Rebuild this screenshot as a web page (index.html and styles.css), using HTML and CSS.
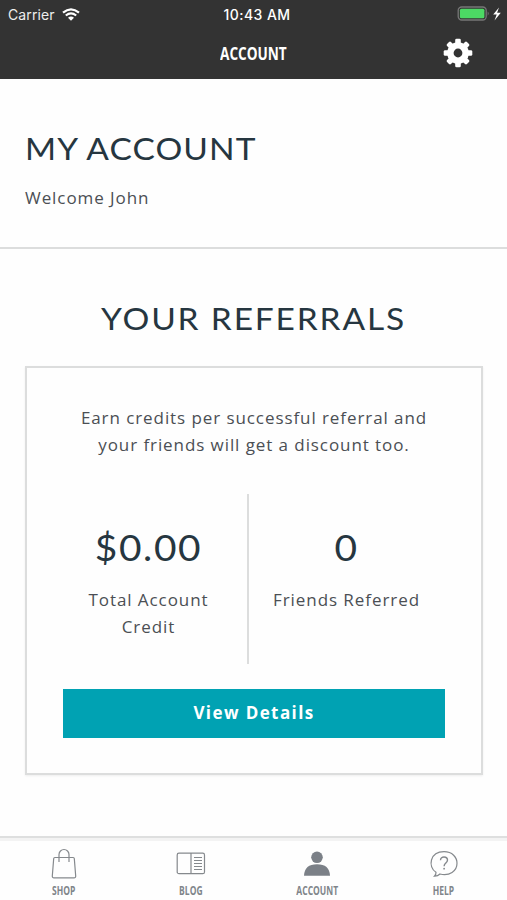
FILE: index.html
```html
<!DOCTYPE html>
<html lang="en">
<head>
<meta charset="utf-8">
<title>Account</title>
<link rel="stylesheet" href="styles.css">
</head>
<body>
<header class="top">
  <div class="status">
    <div class="carrier"><span>Carrier</span>
      <svg class="wifi" width="18" height="13" viewBox="0 0 18 13" fill="none" stroke="#fff" stroke-width="2.2"><path d="M1 4.700Q9-2 17 4.700M3.800 7.500Q9 3.200 14.200 7.500"/><path d="M6 9.800Q9 7.400 12 9.800L9 12.800Z" fill="#fff" stroke="none"/></svg>
    </div>
    <time class="time">10:43 AM</time>
    <div class="power">
      <svg width="46" height="16" viewBox="0 0 46 16"><rect x="1.200" y="1" width="28" height="13" rx="3.500" fill="none" stroke="#777" stroke-width="1.300"/><rect x="2.900" y="2.800" width="24.500" height="9.500" rx="1.500" fill="#4cd964"/><path d="M30.700 5.500q2 2 0 4.200z" fill="#777"/><path d="M42 1.500 36.200 8.600h3.500L37.500 14.500l6.300-7.700h-3.700z" fill="#fff"/></svg>
    </div>
  </div>
  <div class="nav">
    <h1 class="nav-title"><span>ACCOUNT</span></h1>
    <svg class="gear" width="30" height="30" viewBox="-15 -15 30 30" fill="#fff"><g><rect x="-2.800" y="-14.300" width="5.600" height="28.600" rx="1.400"/><rect x="-14.300" y="-2.800" width="28.600" height="5.600" rx="1.400"/></g><g transform="rotate(45)"><rect x="-2.800" y="-14.100" width="5.600" height="28.200" rx="1.400"/><rect x="-14.100" y="-2.800" width="28.200" height="5.600" rx="1.400"/></g><circle r="10.800"/><circle r="4.400" fill="#333"/></svg>
  </div>
</header>
<main>
  <section class="intro">
    <h2 class="heading my-account">MY ACCOUNT</h2>
    <p class="welcome">Welcome John</p>
  </section>
  <section class="referrals">
    <h2 class="heading your-referrals">YOUR REFERRALS</h2>
    <div class="card">
      <p class="blurb">Earn credits per successful referral and<br>your friends will get a discount too.</p>
      <div class="stats">
        <div class="stat"><strong class="number">$0.00</strong><span class="label">Total Account<br>Credit</span></div>
        <div class="stat"><strong class="number">0</strong><span class="label">Friends Referred</span></div>
      </div>
      <button class="details">View Details</button>
    </div>
  </section>
</main>
<nav class="tabs">
  <div class="tab">
    <svg width="30" height="34" viewBox="0 0 30 34" fill="none" stroke="#85898d" stroke-width="1.200"><path d="M5.800 11.500h18.400q1 0 1.100 1L26.700 30q.1 1.800-1.700 1.800H5Q3.200 31.800 3.300 30L4.700 12.500q.1-1 1.100-1zM10 16V8.500a5 5 0 0 1 10 0V16"/></svg>
    <span class="tab-name">SHOP</span>
  </div>
  <div class="tab">
    <svg width="30" height="34" viewBox="0 0 30 34" fill="none" stroke="#85898d" stroke-width="1.200"><rect x="1.200" y="7.200" width="27.300" height="20.500" rx="1.800"/><path d="M15 7v21M18 11.500h8M18 14.500h8M18 17.500h8M18 20.500h8M18 23.500h8"/></svg>
    <span class="tab-name">BLOG</span>
  </div>
  <div class="tab">
    <svg width="30" height="34" viewBox="0 0 30 34" fill="#7b8087"><circle cx="15" cy="11.300" r="5.800"/><path d="M2 29.700Q2.500 18.300 15 18.300T28 29.700z"/></svg>
    <span class="tab-name">ACCOUNT</span>
  </div>
  <div class="tab">
    <svg width="30" height="34" viewBox="0 0 30 34" fill="none" stroke="#85898d" stroke-width="1.200"><path d="M7 26.300C-1.500 21 .8 5.700 15 5.700c8.300 0 13 5.500 13 11.500 0 8-7.500 13-17 10.800-1.500 1.500-3.500 2.300-5.600 2.200Q7.200 28.500 7 26.300z"/><path d="M11.500 14.300c0-4.600 7-4.200 7-.2 0 3-3.400 3-3.400 6.200" stroke-width="1.400"/><circle cx="15.100" cy="22.700" r=".9" fill="#85898d" stroke="none"/></svg>
    <span class="tab-name">HELP</span>
  </div>
</nav>
</body>
</html>
```
FILE: styles.css
```css
* { box-sizing: border-box; margin: 0; padding: 0; }
body { width: 507px; height: 900px; overflow: hidden; display: flex; flex-direction: column; background: #fefefe; font-family: "Open Sans", sans-serif; color: #4b4f54; }
svg { display: block; }
.top { height: 79px; flex: none; background: #333; color: #fff; }
.status { height: 27px; display: grid; grid-template-columns: 1fr 1fr 1fr; align-items: center; padding: 0 4px 0 8px; font: 14px/27px Inter, sans-serif; }
.carrier { display: flex; align-items: center; gap: 7px; color: #eee; letter-spacing: .1px; }
.time { text-align: center; font-weight: 500; font-size: 14px; letter-spacing: .45px; padding-left: 3px; padding-top: 1px; white-space: nowrap; }
.power { display: flex; justify-content: flex-end; }
.nav { display: grid; grid-template-columns: 1fr 68px 1fr; height: 52px; align-items: center; padding-right: 34px; padding-left: 34px; }
.nav-title { grid-column: 2; font-size: 18.5px; line-height: 50px; }
.nav-title span { display: inline-block; transform: scaleX(.735); transform-origin: left; }
.gear { justify-self: end; }
.heading { font: 400 31px/38px Lato, sans-serif; padding-bottom: 2px; color: #263640; white-space: nowrap; }
.intro { height: 170px; padding: 50px 25px 0; border-bottom: 2px solid #dcdddd; }
.my-account { letter-spacing: 1px; transform: scaleX(1.08); transform-origin: left; }
.welcome { margin-top: 15px; font-size: 17px; line-height: 27px; letter-spacing: .93px; }
.referrals { padding: 50px 25px 0; text-align: center; }
.your-referrals { letter-spacing: 1.7px; transform: scaleX(1.08); }
.card { margin-top: 27px; width: 458px; height: 409px; border: 2px solid #dcdddd; box-shadow: 0 1px 2px #0001; padding: 36px 36px 0; }
.blurb { font-size: 17px; line-height: 27px; letter-spacing: .92px; white-space: nowrap; }
.stats { display: grid; grid-template-columns: 186px 1fr; height: 170px; margin-top: 36px; }
.stat { padding-top: 28px; }
.stat:first-child { border-right: 2px solid #dcdddd; padding-right: 13px; }
.stat:last-child { margin-left: -1px; }
.number { display: block; font: 400 36px/50px Lato, sans-serif; letter-spacing: 1.5px; color: #263640; transform: scaleX(1.08); }
.label { display: block; margin-top: 14px; font-size: 17px; line-height: 27px; letter-spacing: .93px; white-space: nowrap; }
.details { display: block; width: 382px; height: 49px; margin-top: 25px; border: 0; background: #00a2b3; color: #fff; font: 700 17px/47px "Open Sans", sans-serif; letter-spacing: 1.4px; padding-bottom: 2px; }
.tabs { margin-top: auto; height: 64px; flex: none; display: grid; grid-template-columns: repeat(4, 1fr); border-top: 2px solid #dedfdf; box-shadow: inset 0 3px #f3f3f3; padding-top: 8px; padding-left: 1px; }
.tab { display: flex; flex-direction: column; align-items: center; }
.tab-name { margin-top: 2px; font-size: 11.5px; line-height: 18px; font-weight: 700; color: #80858a; transform: scaleX(.74); }
```
